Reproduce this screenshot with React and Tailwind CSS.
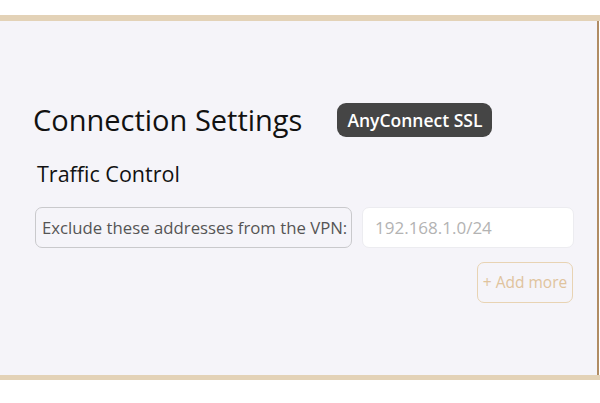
export default function App() {
  return (
    <div className="w-[600px] h-[403px] bg-white pt-[15px] font-['Open_Sans',sans-serif]">
      <div className="border-t-[6px] border-b-[5px] border-[#e3d2b7]">
        <div className="h-[354px] w-[599px] bg-[#f5f4f9] border-r-2 border-[#b08c64] pt-[79px]">
          <div className="flex items-center pl-[33px]">
            <h1 className="text-[29px] leading-[40px] text-[#111] font-normal">
              Connection Settings
            </h1>
            <span className="ml-[35px] h-[34px] px-[10px] flex items-center rounded-[9px] bg-[#454545] text-white text-[17.5px] font-semibold">
              AnyConnect SSL
            </span>
          </div>
          <h2 className="pl-[37px] mt-[20px] text-[21.5px] leading-[28px] text-[#111]">
            Traffic Control
          </h2>
          <div className="flex pl-[35px] mt-[19px] gap-[10px]">
            <div className="w-[317px] h-[41px] flex items-center px-[6px] rounded-[7px] border border-[#c9c9cc] text-[16.75px] text-[#555] whitespace-nowrap">
              Exclude these addresses from the VPN:
            </div>
            <input
              className="w-[212px] h-[41px] px-[12px] rounded-[7px] border border-[#ececf0] bg-white text-[17px] text-[#333] placeholder:text-[#b3b3b3] outline-none"
              placeholder="192.168.1.0/24"
            />
          </div>
          <div className="flex justify-end pr-[24px] mt-[14px]">
            <button className="w-[96px] h-[41px] rounded-[7px] border border-[#e8d3b3] text-[15.5px] text-[#e0c39d]">
              + Add more
            </button>
          </div>
        </div>
      </div>
    </div>
  );
}
